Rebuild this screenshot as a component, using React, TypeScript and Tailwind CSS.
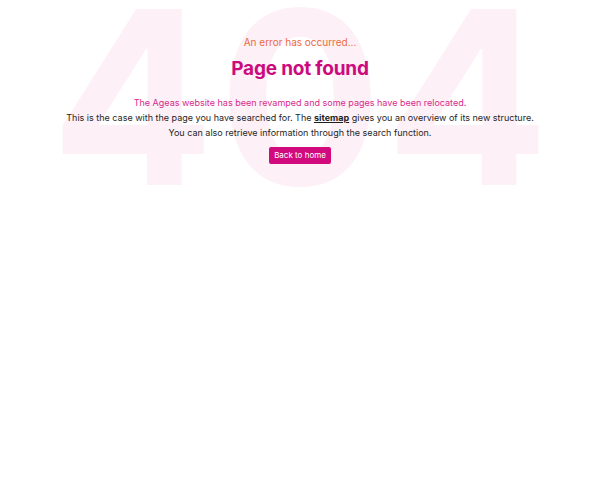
export default function App() {
  return (
    <div className="relative w-[600px] h-[480px] bg-white overflow-hidden font-['Inter',sans-serif]">
      {/* big faded 404 in the back */}
      <div className="absolute left-0 top-[-24px] w-full pl-[4px] text-center text-[242px] font-bold leading-none text-[#fdf0f6] select-none tracking-[4px]">
        404
      </div>
      <div className="relative flex flex-col items-center pt-[35px] text-center">
        <p className="text-[10px] leading-[14px] text-[#ec6b3d]">An error has occurred...</p>
        <h1 className="mt-[8px] text-[19px] leading-[24px] font-bold text-[#cc0a7d] tracking-[-0.2px]">
          Page not found
        </h1>
        <div className="mt-[14px] text-[9px] leading-[15px]">
          <p className="text-[#d82a8c]">
            The Ageas website has been revamped and some pages have been relocated.
          </p>
          <p className="text-[#1f1f1f]">
            This is the case with the page you have searched for. The{" "}
            <a href="#" className="font-bold underline">sitemap</a> gives you an overview of its new structure.
          </p>
          <p className="text-[#1f1f1f]">You can also retrieve information through the search function.</p>
        </div>
        <button className="mt-[7px] h-[17px] px-[5px] rounded-[2px] bg-[#d10a7e] text-white text-[8px] leading-[17px]">
          Back to home
        </button>
      </div>
    </div>
  );
}
